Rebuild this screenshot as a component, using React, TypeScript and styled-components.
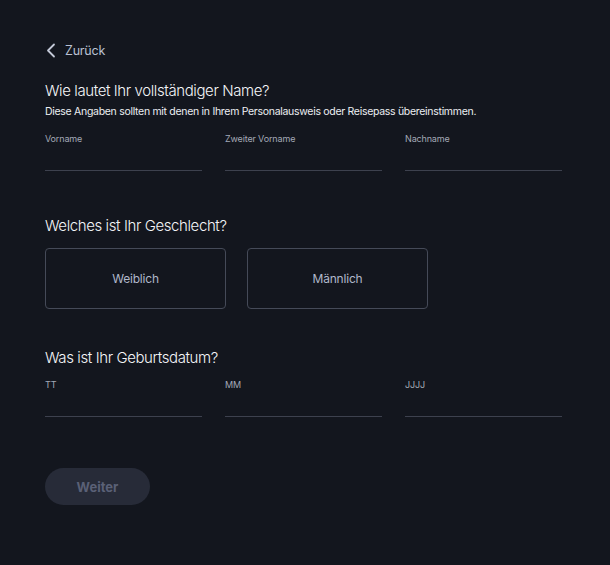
import { createGlobalStyle, styled } from "styled-components";
import { FunctionComponent, useState } from "react";

const GlobalStyle = createGlobalStyle`
  html, body {
    margin: 0;
    padding: 0;
    background: #13161e;
  }
  body {
    font-family: Inter, "Noto Sans", sans-serif;
    -webkit-font-smoothing: antialiased;
  }
  * { box-sizing: border-box; }
`;

const Page = styled.div`
  min-height: 565px;
  background: #13161e;
  padding: 40px 48px 40px 45px;
  display: flex;
  flex-direction: column;
`;

const BackLink = styled.button`
  display: flex;
  align-items: center;
  gap: 8px;
  height: 20px;
  padding: 0 0 0 1px;
  background: none;
  border: none;
  color: #b9c0d2;
  font-family: inherit;
  font-size: 12.5px;
  letter-spacing: -0.2px;
  cursor: pointer;
  align-self: flex-start;
`;

const Title = styled.h2<{ $gap: number }>`
  margin: ${(p) => p.$gap}px 0 0;
  font-size: 15px;
  line-height: 20px;
  font-weight: 300;
  color: #f4f5f8;
  letter-spacing: -0.4px;
`;

const Subtitle = styled.p`
  margin: 3px 0 0;
  font-size: 10.5px;
  line-height: 16px;
  color: #eceef2;
  letter-spacing: -0.3px;
`;

const FieldRow = styled.div<{ $gap: number }>`
  margin-top: ${(p) => p.$gap}px;
  display: grid;
  grid-template-columns: repeat(3, 157px);
  column-gap: 23px;
`;

const Field = styled.label`
  display: flex;
  flex-direction: column;
`;

const FieldLabel = styled.span`
  font-size: 9px;
  line-height: 14px;
  color: #a3a9b7;
  letter-spacing: -0.15px;
`;

const FieldInput = styled.input`
  height: 25px;
  background: transparent;
  border: none;
  border-bottom: 1.5px solid #3d414e;
  color: #f2f3f6;
  font-family: inherit;
  font-size: 13px;
  outline: none;
  padding: 0;
`;

const ChoiceRow = styled.div`
  margin-top: 12px;
  display: flex;
  gap: 21px;
`;

const Choice = styled.button<{ $active: boolean }>`
  width: 181px;
  height: 61px;
  background: transparent;
  border: 1px solid ${(p) => (p.$active ? "#8e96ab" : "#454a58")};
  border-radius: 4px;
  color: #b0b8cb;
  font-family: inherit;
  font-size: 12px;
  letter-spacing: -0.2px;
  cursor: pointer;
`;

const NextButton = styled.button`
  margin-top: 51px;
  width: 105px;
  height: 37px;
  border: none;
  border-radius: 19px;
  background: #272b38;
  color: #5a6076;
  font-family: inherit;
  font-size: 13px;
  font-weight: 700;
  align-self: flex-start;
`;

const ChevronLeft = () => (
  <svg width="11" height="15" viewBox="0 0 11 15" fill="none">
    <path d="M8 1.5 2 7.5l6 6" stroke="#c3c9d8" strokeWidth="1.8" strokeLinecap="round" strokeLinejoin="round" />
  </svg>
);

const nameFields = ["Vorname", "Zweiter Vorname", "Nachname"];
const dateFields = ["TT", "MM", "JJJJ"];

const App: FunctionComponent = () => {
  const [gender, setGender] = useState<string | null>(null);

  return (
    <>
      <GlobalStyle />
      <Page>
        <BackLink>
          <ChevronLeft />
          Zurück
        </BackLink>

        <Title $gap={21}>Wie lautet Ihr vollständiger Name?</Title>
        <Subtitle>Diese Angaben sollten mit denen in Ihrem Personalausweis oder Reisepass übereinstimmen.</Subtitle>
        <FieldRow $gap={12}>
          {nameFields.map((label) => (
            <Field key={label}>
              <FieldLabel>{label}</FieldLabel>
              <FieldInput />
            </Field>
          ))}
        </FieldRow>

        <Title $gap={45}>Welches ist Ihr Geschlecht?</Title>
        <ChoiceRow>
          {["Weiblich", "Männlich"].map((g) => (
            <Choice key={g} $active={gender === g} onClick={() => setGender(g)}>
              {g}
            </Choice>
          ))}
        </ChoiceRow>

        <Title $gap={39}>Was ist Ihr Geburtsdatum?</Title>
        <FieldRow $gap={10}>
          {dateFields.map((label) => (
            <Field key={label}>
              <FieldLabel>{label}</FieldLabel>
              <FieldInput />
            </Field>
          ))}
        </FieldRow>

        <NextButton disabled>Weiter</NextButton>
      </Page>
    </>
  );
};

export default App;
